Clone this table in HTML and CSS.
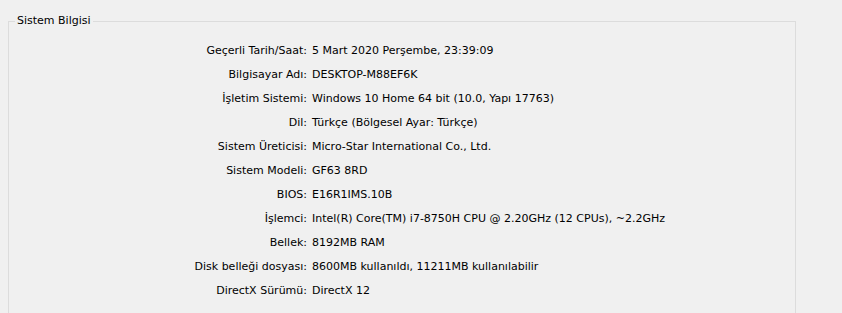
FILE: index.html
```html
<!DOCTYPE html>
<html lang="tr">
<head>
<meta charset="utf-8">
<title>Sistem Bilgisi</title>
<link rel="stylesheet" href="styles.css">
</head>
<body>
<fieldset class="group">
  <legend class="group-title">Sistem Bilgisi</legend>
  <div class="info">
    <div class="label">Geçerli Tarih/Saat:</div><div class="value">5 Mart 2020 Perşembe, 23:39:09</div>
    <div class="label">Bilgisayar Adı:</div><div class="value">DESKTOP-M88EF6K</div>
    <div class="label">İşletim Sistemi:</div><div class="value">Windows 10 Home 64 bit (10.0, Yapı 17763)</div>
    <div class="label">Dil:</div><div class="value">Türkçe (Bölgesel Ayar: Türkçe)</div>
    <div class="label">Sistem Üreticisi:</div><div class="value">Micro-Star International Co., Ltd.</div>
    <div class="label">Sistem Modeli:</div><div class="value">GF63 8RD</div>
    <div class="label">BIOS:</div><div class="value">E16R1IMS.10B</div>
    <div class="label">İşlemci:</div><div class="value">Intel(R) Core(TM) i7-8750H CPU @ 2.20GHz (12 CPUs), ~2.2GHz</div>
    <div class="label">Bellek:</div><div class="value">8192MB RAM</div>
    <div class="label">Disk belleği dosyası:</div><div class="value">8600MB kullanıldı, 11211MB kullanılabilir</div>
    <div class="label">DirectX Sürümü:</div><div class="value">DirectX 12</div>
  </div>
</fieldset>
</body>
</html>
```
FILE: styles.css
```css
html, body {
  margin: 0;
  padding: 0;
  background: #f0f0f0;
  overflow: hidden;
}
body {
  font-family: "DejaVu Sans", Verdana, sans-serif;
  font-size: 11px;
  color: #000;
  padding: 14px 0 0 8px;
  height: 313px;
  box-sizing: border-box;
}
.group {
  margin: 0;
  padding: 0;
  width: 788px;
  height: 400px;
  box-sizing: border-box;
  border: 1px solid #dcdcdc;
}
.group-title {
  margin-left: 6px;
  padding: 0 2px;
  line-height: 14px;
}
.info {
  display: grid;
  grid-template-columns: 298px auto;
  column-gap: 5px;
  padding-top: 11px;
}
.label {
  text-align: right;
  line-height: 24px;
  white-space: nowrap;
}
.value {
  line-height: 24px;
  white-space: nowrap;
}
```
